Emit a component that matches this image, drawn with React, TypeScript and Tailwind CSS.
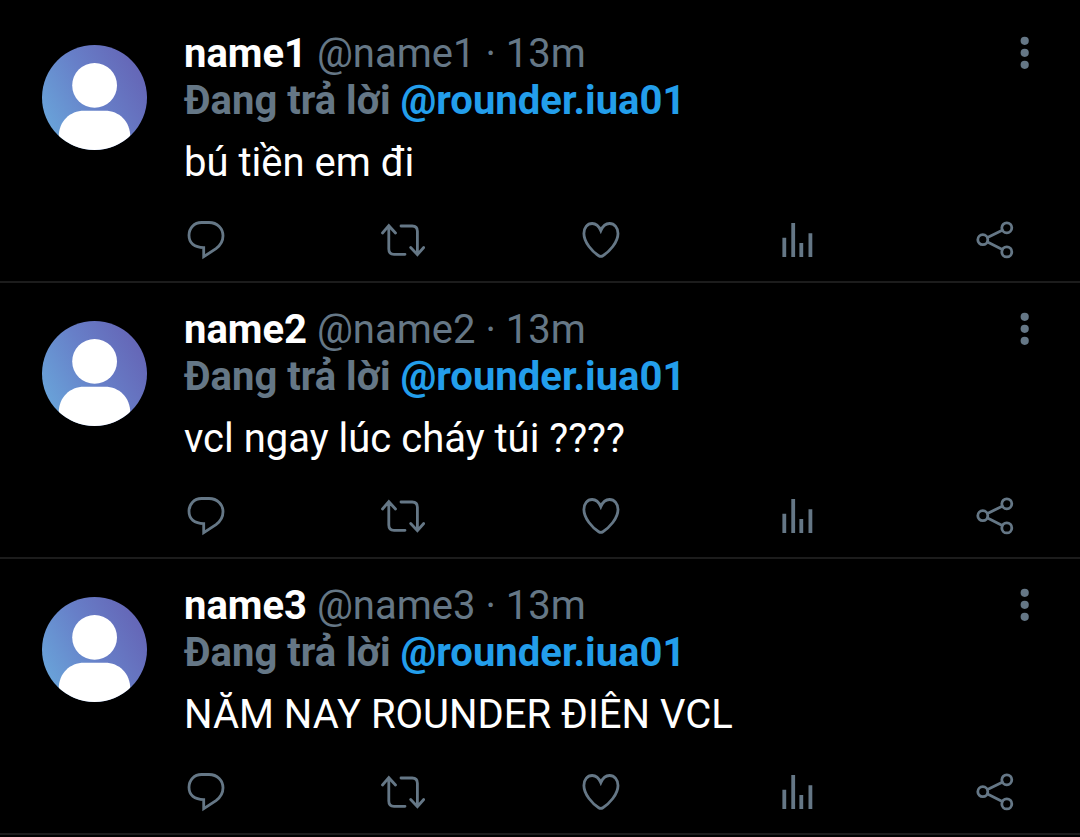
import { ReactNode } from "react";

const tweets = [
  { name: "name1", handle: "@name1", time: "13m", text: "bú tiền em đi" },
  { name: "name2", handle: "@name2", time: "13m", text: "vcl ngay lúc cháy túi ????" },
  { name: "name3", handle: "@name3", time: "13m", text: "NĂM NAY ROUNDER ĐIÊN VCL" },
];

function Avatar({ id }: { id: string }) {
  return (
    <svg viewBox="0 0 105 105" className="mt-[15px] size-[105px] shrink-0" aria-hidden="true">
      <defs>
        <linearGradient id={`bg-${id}`} x1="0" y1="0.75" x2="0.9" y2="0.25">
          <stop offset="0" stopColor="#69a5da" />
          <stop offset="0.55" stopColor="#677fc8" />
          <stop offset="1" stopColor="#6568b8" />
        </linearGradient>
        <clipPath id={`clip-${id}`}>
          <circle cx="52.5" cy="52.5" r="52.5" />
        </clipPath>
      </defs>
      <g clipPath={`url(#clip-${id})`}>
        <rect width="105" height="105" fill={`url(#bg-${id})`} />
        <circle cx="52.6" cy="40.4" r="22.4" fill="#fff" />
        <path d="M16.7 110V92C16.7 76 28 65.7 42 65.7H63C77 65.7 88.3 76 88.3 92V110Z" fill="#fff" />
      </g>
    </svg>
  );
}

function ActionButton({ label, children }: { label: string; children: ReactNode }) {
  return (
    <button type="button" aria-label={label} className="cursor-pointer">
      <svg
        viewBox="0 0 44 44"
        className="size-11"
        fill="none"
        stroke="currentColor"
        strokeWidth="2.8"
        strokeLinecap="round"
      >
        {children}
      </svg>
    </button>
  );
}

function Actions() {
  return (
    <div className="mt-8 flex justify-between pr-[42px]">
      <ActionButton label="Trả lời">
        <path
          d="M17.5 4.5H25C33.5 4.5 39 10.5 39 17.8C39 23.5 36 27.7 32 30.7L19.7 38.7V29.6C10.5 29.6 5 25.3 5 17.3C5 10 10.2 4.5 17.5 4.5Z"
          strokeLinecap="butt"
        />
      </ActionButton>
      <ActionButton label="Đăng lại">
        <path d="M1.5 15L7.8 7.7L14.5 15M7.8 8.5V31C7.8 34.5 9.5 36.3 13 36.3H24" />
        <path d="M20 8H31.2C34.7 8 36.4 9.8 36.4 13.3V36M29.7 29.5L36.4 36.6L42.7 29.5" />
      </ActionButton>
      <ActionButton label="Thích">
        <path d="M21.8 12.7C19.8 8 16.5 5.5 13.2 5.5C8.2 5.5 4.9 9.8 4.9 15.5C4.9 24.5 13.5 33.8 19.7 37.7Q21.8 39 23.9 37.7C30.1 33.8 39 24.5 39 15.5C39 9.8 35.5 5.5 30.5 5.5C27.1 5.5 23.8 8 21.8 12.7Z" />
      </ActionButton>
      <ActionButton label="Thống kê">
        <path
          d="M8.3 19.7V39M17.2 5V39M25.3 25V39M34.4 15.3V39"
          strokeWidth="3.8"
          strokeLinecap="butt"
        />
      </ActionButton>
      <ActionButton label="Chia sẻ">
        <circle cx="9.8" cy="21.7" r="5" />
        <circle cx="33.8" cy="9.8" r="5" />
        <circle cx="33.8" cy="33.9" r="5" />
        <path d="M14.5 19.4L29.3 12.2M14.5 24L29.3 31.6" />
      </ActionButton>
    </div>
  );
}

export default function App() {
  return (
    <main className="min-h-screen bg-black pt-[7px] font-['Roboto',sans-serif] text-[40px] leading-[47px] text-[#657786]">
      {tweets.map((tweet) => (
        <article
          key={tweet.name}
          className="flex gap-[37px] border-b-2 border-[#1c1c1c] pt-[23px] pr-[21px] pb-[19px] pl-[42px]"
        >
          <Avatar id={tweet.name} />
          <div className="min-w-0 flex-1">
            <div className="flex items-start justify-between">
              <p>
                <span className="font-bold text-white">{tweet.name}</span>{" "}
                <span>
                  {tweet.handle} · {tweet.time}
                </span>
              </p>
              <button type="button" aria-label="Thêm" className="cursor-pointer">
                <svg viewBox="0 0 68 46" className="h-[46px] w-[68px]" fill="currentColor">
                  <circle cx="33.7" cy="10.8" r="4.1" />
                  <circle cx="33.7" cy="22.8" r="4.1" />
                  <circle cx="33.7" cy="34.8" r="4.1" />
                </svg>
              </button>
            </div>
            <p className="font-bold">
              Đang trả lời{" "}
              <a href="#" className="text-[#239eeb]">
                @rounder.iua01
              </a>
            </p>
            <p className="mt-[15px] text-white">{tweet.text}</p>
            <Actions />
          </div>
        </article>
      ))}
    </main>
  );
}
